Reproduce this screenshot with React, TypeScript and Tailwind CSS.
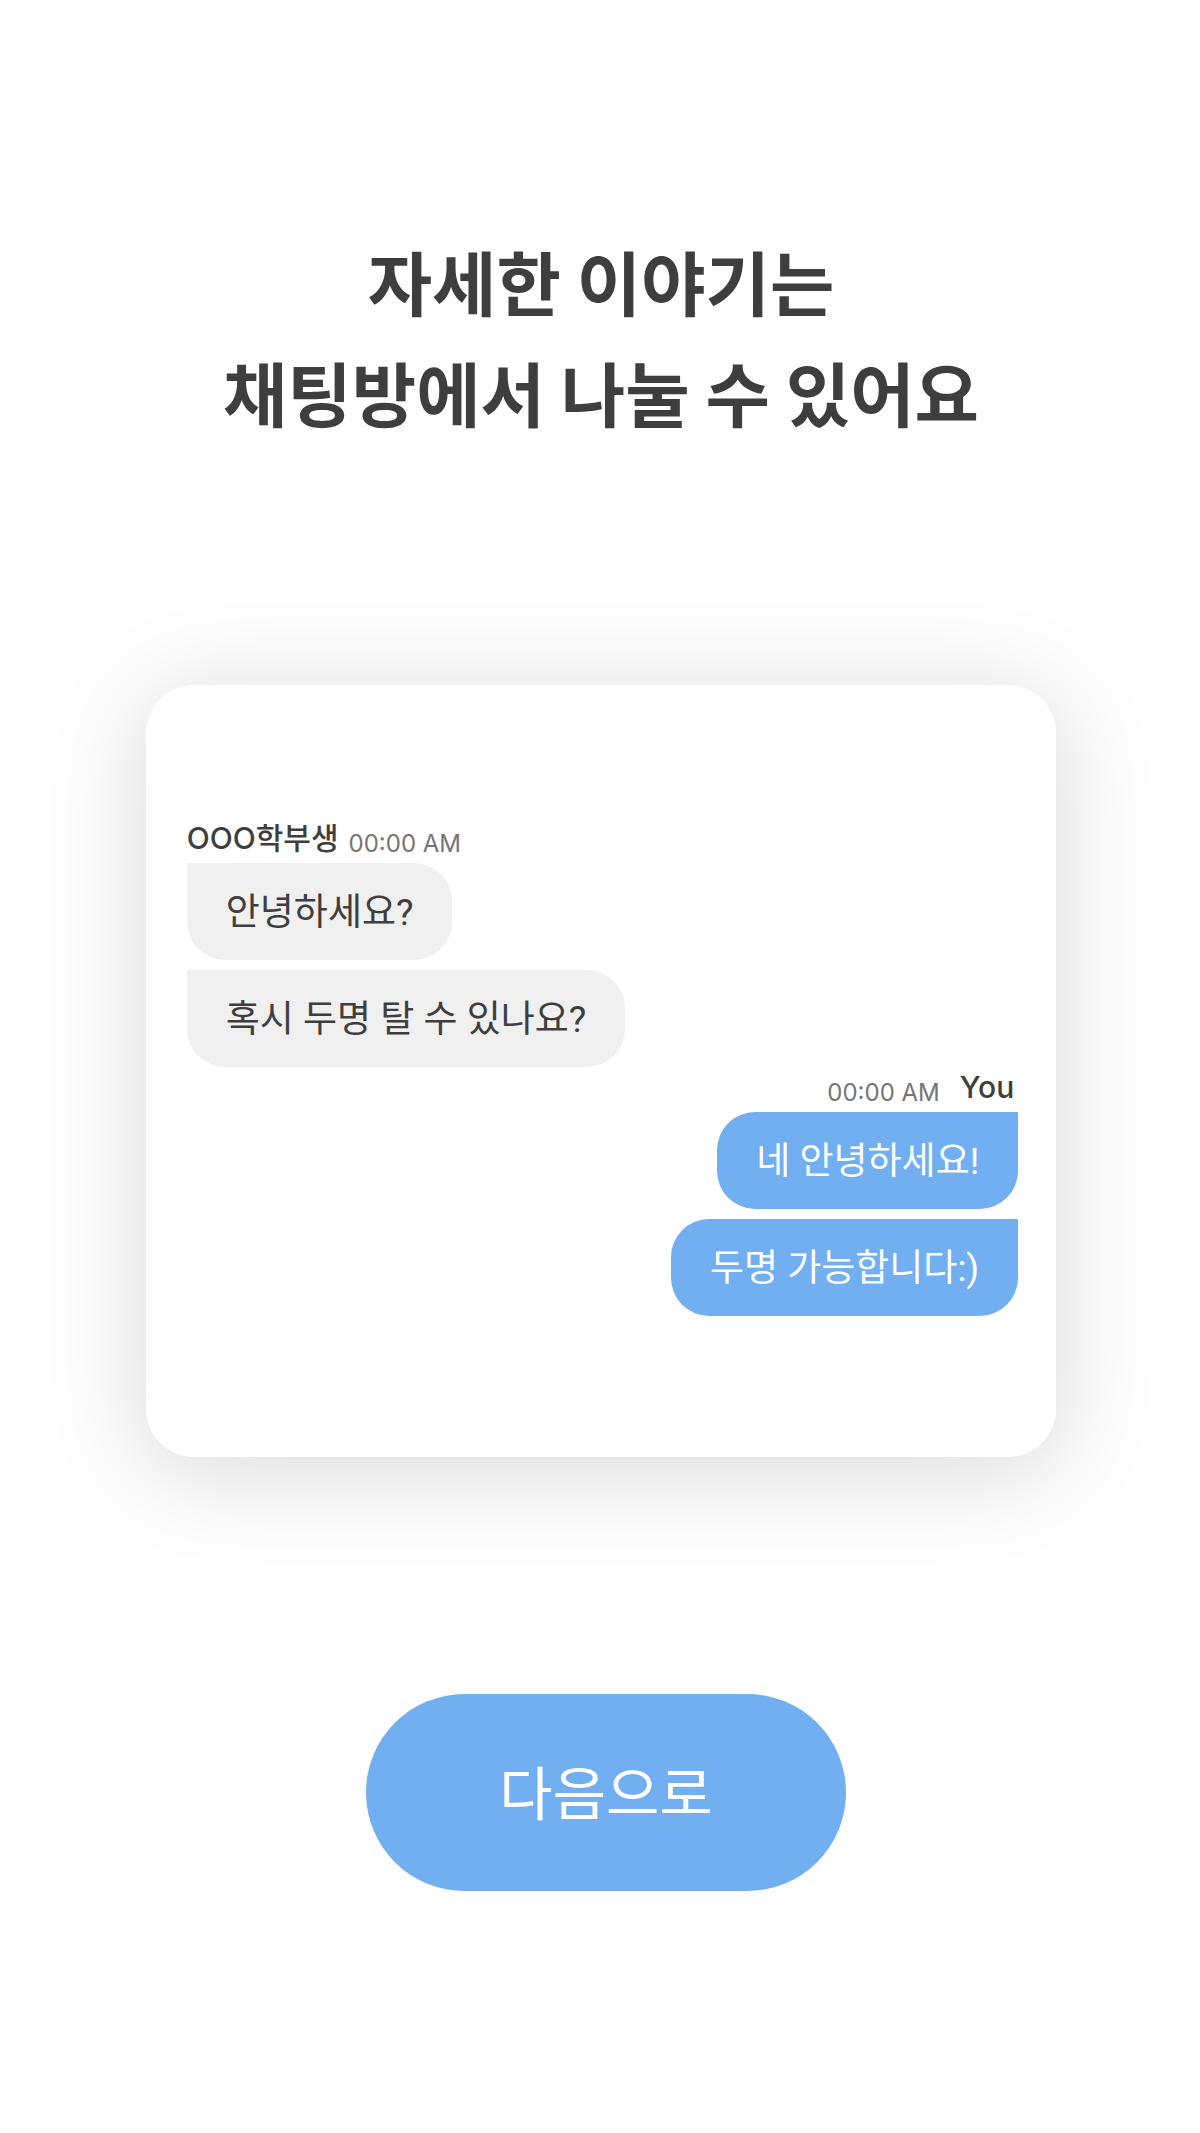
import clsx from "clsx";

interface MessageGroupProps {
  author: string;
  time: string;
  messages: string[];
  mine?: boolean;
}

function MessageGroup({ author, time, messages, mine = false }: MessageGroupProps) {
  return (
    <section className={clsx("flex flex-col", mine ? "items-end" : "items-start")}>
      <header
        className={clsx(
          "flex items-end font-['Inter','Noto_Sans_CJK_KR',sans-serif]",
          mine ? "flex-row-reverse gap-5 pr-1" : "gap-[10px]"
        )}
      >
        <span className="text-[30px] leading-10 font-medium text-[#3e3e3e]">{author}</span>
        <time className="text-2xl leading-7 text-[#757575]">{time}</time>
      </header>
      <ul className={clsx("mt-[5px] flex flex-col gap-[10px]", mine ? "items-end" : "items-start")}>
        {messages.map((message) => (
          <li
            key={message}
            className={clsx(
              "rounded-[38px] px-[39px] pt-[25px] pb-[23px] text-[37px] leading-[49px]",
              mine
                ? "rounded-tr-none bg-[#71aff0] text-white"
                : "rounded-tl-none bg-[#f0f0f0] text-[#3e3e3e]"
            )}
          >
            {message}
          </li>
        ))}
      </ul>
    </section>
  );
}

export default function App() {
  return (
    <main className="flex min-h-screen flex-col items-center bg-[#fefefe] pt-[225px] pb-[242px] pl-[2px] font-['Noto_Sans_CJK_KR',sans-serif]">
      <h1 className="text-center text-[70px] leading-[111px] font-bold text-[#3e3e3e]">
        자세한 이야기는
        <br />
        채팅방에서 나눌 수 있어요
      </h1>

      {/* Chat preview */}
      <div className="mt-[238px] w-[76%] rounded-[48px] bg-white pt-[133px] pr-[38px] pb-[141px] pl-[41px] font-['Roboto','Noto_Sans_CJK_KR',sans-serif] shadow-[0_12px_100px_rgba(0,0,0,0.15)]">
        <MessageGroup
          author="OOO학부생"
          time="00:00 AM"
          messages={["안녕하세요?", "혹시 두명 탈 수 있나요?"]}
        />
        <MessageGroup
          mine
          author="You"
          time="00:00 AM"
          messages={["네 안녕하세요!", "두명 가능합니다:)"]}
        />
      </div>

      <button
        type="button"
        className="mt-[237px] ml-[10px] h-[197px] w-[40%] rounded-full bg-[#71aff0] pb-1 text-[58px] text-white"
      >
        다음으로
      </button>
    </main>
  );
}
